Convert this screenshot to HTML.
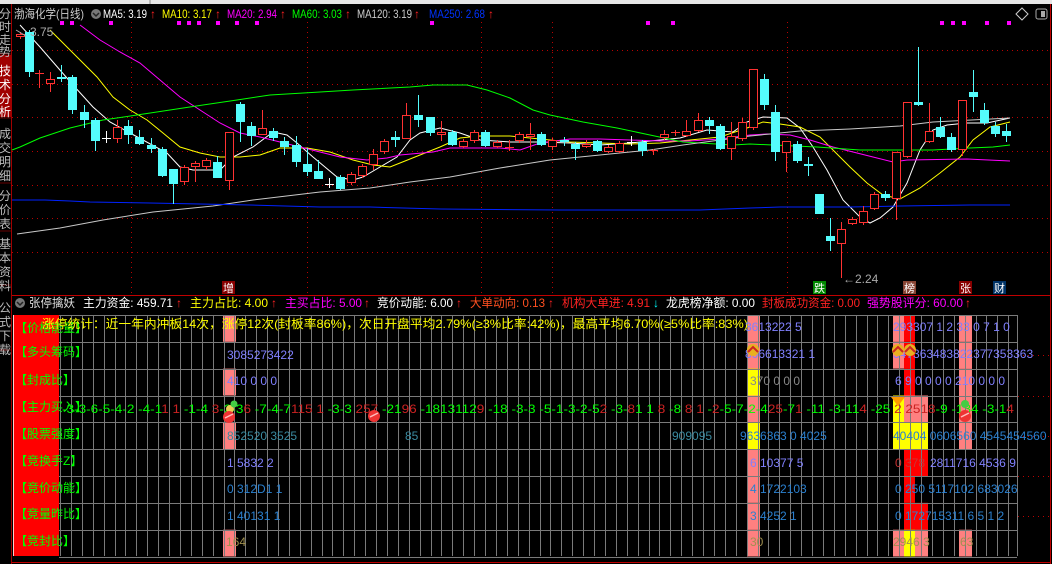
<!DOCTYPE html>
<html><head><meta charset="utf-8">
<style>
html,body{margin:0;padding:0;background:#000;width:1052px;height:564px;overflow:hidden}
svg{display:block}
text{font-family:"Liberation Sans","Noto Sans CJK SC",sans-serif}
</style></head>
<body>
<svg id="s" width="1052" height="564" viewBox="0 0 1052 564" xmlns="http://www.w3.org/2000/svg">
<rect x="0" y="0" width="1052" height="564" fill="#000"/>
<rect x="0" y="0" width="1052" height="4" fill="#e6e6e6"/>
<line x1="150" y1="0" x2="150" y2="4" stroke="#888"/>
<rect x="0" y="4" width="11" height="560" fill="#000"/>
<rect x="0" y="55" width="11" height="62" fill="#a00000"/>
<g stroke="#600" stroke-width="1">
<line x1="0" y1="54" x2="11" y2="54"/><line x1="0" y1="118" x2="11" y2="118"/>
<line x1="0" y1="183" x2="11" y2="183"/><line x1="0" y1="231" x2="11" y2="231"/>
<line x1="0" y1="285" x2="11" y2="285"/><line x1="0" y1="350" x2="11" y2="350"/>
</g>
<line x1="11.5" y1="4" x2="11.5" y2="564" stroke="#a00000"/>
<g font-size="12" fill="#bbb">
<text x="-1" y="18">分</text><text x="-1" y="31">时</text><text x="-1" y="44">走</text><text x="-1" y="56">势</text>
<text x="-1" y="75" fill="#fff">技</text><text x="-1" y="89" fill="#fff">术</text><text x="-1" y="103" fill="#fff">分</text><text x="-1" y="116" fill="#fff">析</text>
<text x="-1" y="138">成</text><text x="-1" y="152">交</text><text x="-1" y="166">明</text><text x="-1" y="180">细</text>
<text x="-1" y="200">分</text><text x="-1" y="214">价</text><text x="-1" y="228">表</text>
<text x="-1" y="248">基</text><text x="-1" y="262">本</text><text x="-1" y="276">资</text><text x="-1" y="290">料</text>
<text x="-1" y="312">公</text><text x="-1" y="326">式</text><text x="-1" y="340">下</text><text x="-1" y="354">载</text>
</g>
<line x1="1050.5" y1="4" x2="1050.5" y2="564" stroke="#c00000"/>
<g font-size="12" lengthAdjust="spacingAndGlyphs">
<text x="14" y="18" fill="#ccc" textLength="70" lengthAdjust="spacingAndGlyphs">渤海化学(日线)</text>
<circle cx="96" cy="14" r="5" fill="#777"/><path d="M93 13 L96 16 L99 13" stroke="#222" stroke-width="1.5" fill="none"/>
<text x="103" y="18" fill="#fff" textLength="44" lengthAdjust="spacingAndGlyphs">MA5: 3.19</text><text x="150" y="18" fill="#f22">↑</text>
<text x="162" y="18" fill="#ff0" textLength="50" lengthAdjust="spacingAndGlyphs">MA10: 3.17</text><text x="215" y="18" fill="#f22">↑</text>
<text x="227" y="18" fill="#f0f" textLength="50" lengthAdjust="spacingAndGlyphs">MA20: 2.94</text><text x="280" y="18" fill="#f22">↑</text>
<text x="292" y="18" fill="#0f0" textLength="50" lengthAdjust="spacingAndGlyphs">MA60: 3.03</text><text x="345" y="18" fill="#f22">↑</text>
<text x="357" y="18" fill="#ccc" textLength="55" lengthAdjust="spacingAndGlyphs">MA120: 3.19</text><text x="414" y="18" fill="#f22">↑</text>
<text x="429" y="18" fill="#0033ff" textLength="56" lengthAdjust="spacingAndGlyphs">MA250: 2.68</text><text x="488" y="18" fill="#f22">↑</text>
</g>
<path d="M1022 8 L1028 14 L1022 20 L1016 14 Z" stroke="#ccc" fill="none"/>
<rect x="1036" y="9" width="11" height="10" rx="2" stroke="#aaa" fill="none"/><rect x="1041" y="11" width="4" height="6" fill="#aaa"/>
<g id="grid"></g>
<g id="ma" fill="none" stroke-width="1"></g>
<g id="cdl"></g>
<text x="30" y="36" font-size="12" fill="#aaa">3.75</text>
<path d="M16 30 L26 36" stroke="#aaa"/>
<text x="843" y="283" font-size="12" fill="#aaa">←2.24</text>
<g id="dots" fill="#f0f"></g>
<rect x="222" y="281" width="13" height="13" fill="#800"/><text x="223" y="292" font-size="11" fill="#fff">增</text>
<rect x="813" y="281" width="13" height="13" fill="#080"/><text x="814" y="292" font-size="11" fill="#fff">跌</text>
<rect x="903" y="281" width="13" height="13" fill="#843"/><text x="904" y="292" font-size="11" fill="#fff">榜</text>
<rect x="959" y="281" width="13" height="13" fill="#800"/><text x="960" y="292" font-size="11" fill="#fff">张</text>
<rect x="993" y="281" width="13" height="13" fill="#036"/><text x="994" y="292" font-size="11" fill="#fff">财</text>
<line x1="12" y1="295.5" x2="1050" y2="295.5" stroke="#c00000"/>
<g font-size="12">
<circle cx="20" cy="303" r="5" fill="#777"/><path d="M17 302 L20 305 L23 302" stroke="#222" stroke-width="1.5" fill="none"/>
<text x="29" y="307" fill="#ddd" textLength="46" lengthAdjust="spacingAndGlyphs">张停擒妖</text>
<text x="83" y="307" fill="#fff" textLength="90" lengthAdjust="spacingAndGlyphs">主力资金: 459.71</text><text x="176" y="307" fill="#f22">↑</text>
<text x="190" y="307" fill="#ff0" textLength="78" lengthAdjust="spacingAndGlyphs">主力占比: 4.00</text><text x="271" y="307" fill="#f22">↑</text>
<text x="285" y="307" fill="#f0f" textLength="77" lengthAdjust="spacingAndGlyphs">主买占比: 5.00</text><text x="364" y="307" fill="#f22">↑</text>
<text x="377" y="307" fill="#fff" textLength="76" lengthAdjust="spacingAndGlyphs">竞价动能: 6.00</text><text x="456" y="307" fill="#f22">↑</text>
<text x="470" y="307" fill="#ff5020" textLength="75" lengthAdjust="spacingAndGlyphs">大单动向: 0.13</text><text x="548" y="307" fill="#f22">↑</text>
<text x="562" y="307" fill="#f22" textLength="88" lengthAdjust="spacingAndGlyphs">机构大单进: 4.91</text><text x="653" y="307" fill="#0ff">↓</text>
<text x="666" y="307" fill="#fff" textLength="89" lengthAdjust="spacingAndGlyphs">龙虎榜净额: 0.00</text>
<text x="762" y="307" fill="#f22" textLength="98" lengthAdjust="spacingAndGlyphs">封板成功资金: 0.00</text>
<text x="867" y="307" fill="#f0f" textLength="96" lengthAdjust="spacingAndGlyphs">强势股评分: 60.00</text><text x="965" y="307" fill="#f22">↑</text>
</g>
<rect x="13" y="315" width="46" height="241" fill="#f00"/>
<line x1="13.5" y1="315" x2="13.5" y2="556" stroke="#fcc"/>
<g id="fills"></g>
<g id="lgrid" stroke="#7a7a7a" stroke-width="1"></g>
<g font-size="12" fill="#0f0">
<text x="15" y="332">【价格能量】</text>
<text x="15" y="356">【多头筹码】</text>
<text x="15" y="384">【封成比】</text>
<text x="15" y="411">【主力买入】</text>
<text x="15" y="438">【股票强度】</text>
<text x="15" y="465">【竞换手Z】</text>
<text x="15" y="492">【竞价动能】</text>
<text x="15" y="518">【竞量昨比】</text>
<text x="15" y="545">【竞封比】</text>
</g>
<text x="42" y="328" font-size="12" fill="#ff0" textLength="706" lengthAdjust="spacingAndGlyphs">涨停统计：近一年内冲板14次，涨停12次(封板率86%)，次日开盘平均2.79%(≥3%比率:42%)，最高平均6.70%(≥5%比率:83%)</text>
<g font-size="12" fill="#8080ff">
<text x="745" y="331">3613222 5</text>
<text x="893" y="331">293307 1 2 33 0 7 1 0</text>
<text x="227" y="359">3085273422</text>
<text x="745" y="358">806613321 1</text>
<text x="893" y="358">347363483822377353363</text>
<text x="227" y="385">410 0 0 0</text>
<text x="750" y="385" fill="#888">370 0 0 0</text>
<text x="895" y="385">6 9 0 0 0 0 210 0 0 0</text>
<text x="227" y="467">1 5832 2</text>
<text x="750" y="467">6 10377 5</text>
<text x="895" y="467" fill="#c33">0 378</text><text x="930" y="467">2811716 4536 9</text>
</g>
<g font-size="12" fill="#2a80d0">
<text x="227" y="440" fill="#3a8aa0">852520 3525</text><text x="405" y="440" fill="#3a8aa0">85</text>
<text x="672" y="440" fill="#3a8aa0">909095</text>
<text x="740" y="440">9636363 0 4025</text>
<text x="893" y="440">40404 0606560 4545454560</text>
<text x="227" y="493">0 312D1 1</text>
<text x="750" y="493">4 1722103</text>
<text x="895" y="493">0 250 5117102 683026</text>
<text x="227" y="520">1 40131 1</text>
<text x="750" y="520">3 4252 1</text>
<text x="895" y="520">0 172715311 6 5 1 2</text>
</g>
<g font-size="12" fill="#a09050">
<text x="226" y="546">164</text><text x="750" y="546">30</text><text x="893" y="546">2946 3</text><text x="960" y="546">63</text>
</g>
<text x="62" y="413" font-size="12" fill="#0f0" textLength="952" lengthAdjust="spacingAndGlyphs">-3-3-6-5-4-2  -4-1<tspan fill="#c22">1    1</tspan> -1-4 <tspan fill="#c22">3</tspan>-2-3<tspan fill="#c22">6</tspan> -7-4-7<tspan fill="#c22">115 1</tspan> -3-3   <tspan fill="#c22">257</tspan> -21<tspan fill="#c22">96</tspan> -1813112<tspan fill="#c22">9</tspan> -18 -3-3   -5-1-3-2-5<tspan fill="#c22">2</tspan> -3-<tspan fill="#c22">8</tspan>1 1 <tspan fill="#c22">8</tspan> -8 <tspan fill="#c22">8 1</tspan> -<tspan fill="#c22">2</tspan>-5-7-2-4<tspan fill="#c22">25</tspan>-7<tspan fill="#c22">1</tspan> -11 -3-11<tspan fill="#c22">4</tspan>  -25 <tspan fill="#c22">2  2518</tspan>-9  -134  -3-1<tspan fill="#c22">4</tspan></text>
<g>
<circle cx="230" cy="409" r="4" fill="#ec5"/><circle cx="234" cy="404" r="3.5" fill="#4c4"/>
<circle cx="229" cy="417" r="6" fill="#e33"/><path d="M225 418 L233 414" stroke="#fbb" stroke-width="1.5"/>
<circle cx="374" cy="416" r="6" fill="#e33"/><path d="M370 417 L378 413" stroke="#fbb" stroke-width="1.5"/>
<circle cx="965" cy="404" r="4" fill="#4c4"/>
<circle cx="965" cy="416" r="6" fill="#e33"/><path d="M961 417 L969 413" stroke="#fbb" stroke-width="1.5"/>
<circle cx="753" cy="350" r="6" fill="#e8b020"/><path d="M748 352 L753 347 L758 352" stroke="#c22" stroke-width="2" fill="none"/>
<circle cx="898" cy="350" r="6" fill="#e8b020"/><path d="M893 352 L898 347 L903 352" stroke="#c22" stroke-width="2" fill="none"/>
<circle cx="910" cy="350" r="6" fill="#e8b020"/><path d="M905 352 L910 347 L915 352" stroke="#c22" stroke-width="2" fill="none"/>
<path d="M891 397 L905 397 L898 406 Z" fill="#f90"/>
</g>
<line x1="12" y1="562.5" x2="1050" y2="562.5" stroke="#c00000"/>
<script>
var NS="http://www.w3.org/2000/svg";
function el(p,t,a){var e=document.createElementNS(NS,t);for(var k in a)e.setAttribute(k,a[k]);document.getElementById(p).appendChild(e);return e;}
[50,84,117,151,185,218,252].forEach(function(y){el("grid","line",{x1:12,y1:y+.5,x2:1050,y2:y+.5,stroke:"#b00","stroke-dasharray":"1 4"});});
[131,307,481,552,787].forEach(function(x){el("grid","line",{x1:x+.5,y1:22,x2:x+.5,y2:294,stroke:"#b00","stroke-dasharray":"1 4"});});
[355,396,436,476,516].forEach(function(y){el("grid","line",{x1:1018,y1:y+.5,x2:1050,y2:y+.5,stroke:"#b00","stroke-dasharray":"1 4"});});
var MA={
"#ffffff":[[20,25],[40,47],[53,62],[73,85],[93,107],[110,122],[130,133],[143,140],[167,153],[180,167],[193,170],[220,170],[233,157],[253,147],[273,132],[287,135],[297,143],[313,157],[337,177],[353,180],[363,177],[380,167],[397,157],[410,140],[420,133],[440,128],[460,133],[480,140],[510,142],[540,142],[570,143],[600,145],[630,143],[660,140],[680,138],[707,130],[733,132],[747,122],[763,117],[787,118],[800,128],[813,147],[827,170],[843,200],[860,217],[870,223],[880,218],[893,207],[907,183],[920,150],[933,130],[947,125],[967,123],[987,123],[1010,118]],
"#ffff00":[[50,30],[70,50],[97,77],[113,97],[130,110],[147,120],[163,133],[180,147],[200,153],[220,157],[240,157],[260,155],[280,148],[307,148],[330,152],[353,160],[373,165],[390,167],[400,163],[420,155],[440,147],[460,138],[480,136],[510,136],[540,139],[570,142],[600,143],[630,144],[660,143],[690,140],[720,137],[747,128],[763,122],[780,124],[800,127],[820,137],[833,150],[850,167],[867,183],[883,195],[900,199],[920,188],[940,173],[960,157],[973,140],[990,127],[1010,122]],
"#ff00ff":[[80,25],[100,40],[120,52],[140,63],[160,80],[180,97],[200,110],[220,123],[240,133],[260,137],[280,142],[300,147],[320,152],[340,157],[367,160],[387,158],[400,155],[433,152],[450,148],[500,148],[520,150],[540,143],[570,139],[600,139],[630,140],[660,141],[690,141],[720,139],[750,135],[767,134],[790,135],[810,140],[833,147],[853,152],[873,157],[893,162],[907,160],[967,159],[1010,161]],
"#00ff00":[[12,150],[20,147],[40,138],[70,128],[103,120],[137,115],[170,110],[203,105],[237,100],[270,95],[320,92],[353,90],[410,87],[433,85],[467,85],[487,90],[510,98],[533,110],[550,115],[583,122],[617,128],[650,135],[683,142],[733,145],[750,144],[817,147],[860,150],[933,150],[970,148],[993,147],[1010,145]],
"#c8c8c8":[[17,234],[60,228],[103,220],[153,212],[213,206],[253,200],[320,192],[370,188],[410,182],[450,177],[500,168],[550,160],[600,155],[650,150],[683,145],[750,136],[800,131],[850,129],[900,126],[933,122],[1010,118]],
"#0022ff":[[12,200],[45,200],[70,201],[90,202],[150,203],[250,205],[320,207],[370,207],[440,209],[560,210],[700,210],[750,208],[780,207],[850,207],[900,206],[970,205],[1010,205]]};
for(var c in MA){el("ma","polyline",{points:MA[c].map(function(p){return p.join(",")}).join(" "),stroke:c,fill:"none"});}
var C=[[20,34,37,"r",32,39],[29,32,72,"c",30,77],[39,73,75,"r",70,88],[50,79,84,"r",72,92],[61,77,79,"c",65,82],[72,77,110,"c",75,114],[84,112,120,"c",105,128],[95,120,141,"c",118,151],[106,138,139,"w",131,143],[117,127,139,"r",120,143],[128,126,135,"c",120,144],[139,137,144,"c",130,145],[151,145,149,"c",138,153],[162,149,176,"c",147,177],[173,169,184,"c",169,204],[184,167,182,"r",165,185],[195,163,167,"r",161,182],[206,160,167,"r",158,170],[217,162,178,"c",156,178],[229,132,181,"r",132,190],[240,104,122,"c",102,142],[251,126,136,"c",122,146],[262,128,135,"r",110,135],[273,131,138,"c",128,141],[284,141,147,"c",137,155],[296,145,162,"c",136,167],[307,164,172,"c",148,176],[318,171,179,"c",160,179],[329,184,185,"w",178,188],[340,177,189,"c",175,190],[351,174,183,"r",172,185],[362,166,176,"r",164,178],[373,154,165,"r",149,170],[384,141,152,"r",139,154],[395,137,140,"c",131,147],[406,115,139,"r",103,139],
[418,115,120,"c",95,127],[430,117,133,"c",117,136],[441,132,135,"r",121,141],[452,132,145,"c",130,146],[463,141,147,"r",139,148],[474,132,141,"r",130,143],[485,132,146,"c",130,147],[497,142,147,"r",140,148],[509,147,148,"r",140,151],[519,134,141,"r",132,143],[530,134,137,"r",123,150],[541,134,145,"c",132,146],[552,140,147,"r",138,150],[564,140,142,"c",137,146],[575,144,149,"c",142,160],[586,144,147,"r",140,148],[597,141,151,"c",140,152],[608,147,152,"r",145,153],[619,143,152,"r",141,153],[631,142,143,"w",136,146],[642,142,151,"c",140,156],[653,150,152,"r",149,155],[664,134,138,"r",130,140],[675,132,134,"r",130,136],[686,131,136,"r",120,137],[698,120,131,"r",113,132],[709,120,126,"c",117,134],[720,126,149,"c",124,150],[731,136,149,"r",122,160],[742,122,139,"r",118,141],[753,69,128,"r",69,130],[764,79,105,"c",74,110],[775,112,152,"c",105,161],[786,141,153,"r",141,172],[797,144,161,"c",141,163],[808,164,166,"c",157,176],[819,194,214,"c",194,214],[830,236,241,"c",218,251],[841,229,244,"r",222,278],[852,219,224,"r",217,225],[863,211,223,"r",206,225],[874,194,209,"r",192,210],[885,194,198,"c",191,201],[896,152,199,"r",152,220],[907,102,157,"r",102,158],[918,102,105,"c",47,106],[929,131,142,"r",103,143],[940,127,137,"c",117,138],[951,137,150,"c",133,152],[962,100,150,"r",100,156],[973,92,97,"c",70,112],[984,110,123,"c",103,125],[995,126,134,"c",122,137],[1006,131,136,"c",124,142]];
C.forEach(function(k){var x=k[0],col=k[3]=="c"?"#54fcfc":(k[3]=="r"?"#ff3232":"#fff");
el("cdl","line",{x1:x+.5,y1:k[4],x2:x+.5,y2:k[5],stroke:col});
var h=Math.max(1,k[2]-k[1]);
if(k[3]=="c")el("cdl","rect",{x:x-4,y:k[1],width:9,height:h,fill:col});
else if(h<=2)el("cdl","line",{x1:x-4,y1:k[1]+.5,x2:x+5,y2:k[1]+.5,stroke:col});
else el("cdl","rect",{x:x-3.5,y:k[1]+.5,width:8,height:h-1,fill:"#000",stroke:col});});
[62,72,111,179,189,199,218,237,257,432,648,673,942,953,964,987,1009].forEach(function(x){el("dots","rect",{x:x-2,y:21,width:4,height:4});});
var R=[315,341.8,368.6,395.5,422.3,449.2,476,502.8,529.7,556.5];
function F(x,w,r,c){el("fills","rect",{x:x,y:R[r],width:w,height:R[r+1]-R[r],fill:c});}
var P="#ff8080",Y="#ffff00",RD="#ff0000";
[0,2,4,8].forEach(function(r){F(223,13,r,P)});
[0,1,3,5,6,7,8].forEach(function(r){F(747,13,r,P)});[2,4].forEach(function(r){F(747,13,r,Y)});
[0,1,8].forEach(function(r){F(893,11,r,P)});F(893,11,3,Y);F(893,11,4,Y);
[0,1,2,5,6,7].forEach(function(r){F(904,11,r,RD)});F(904,11,3,P);F(904,11,4,Y);F(904,11,8,Y);
F(915,13,3,P);F(915,13,4,Y);F(915,13,5,RD);F(915,13,7,RD);F(915,13,8,P);
[0,1,2,3,4,8].forEach(function(r){F(959,13,r,P)});
R.forEach(function(y){el("lgrid","line",{x1:59,y1:Math.round(y)+.5,x2:1017,y2:Math.round(y)+.5});});
for(var x=60;x<=1017;x+=10.9){el("lgrid","line",{x1:Math.round(x)+.5,y1:315,x2:Math.round(x)+.5,y2:556});}
el("lgrid","line",{x1:1017.5,y1:315,x2:1017.5,y2:556});
</script>
</svg>
</body></html>
